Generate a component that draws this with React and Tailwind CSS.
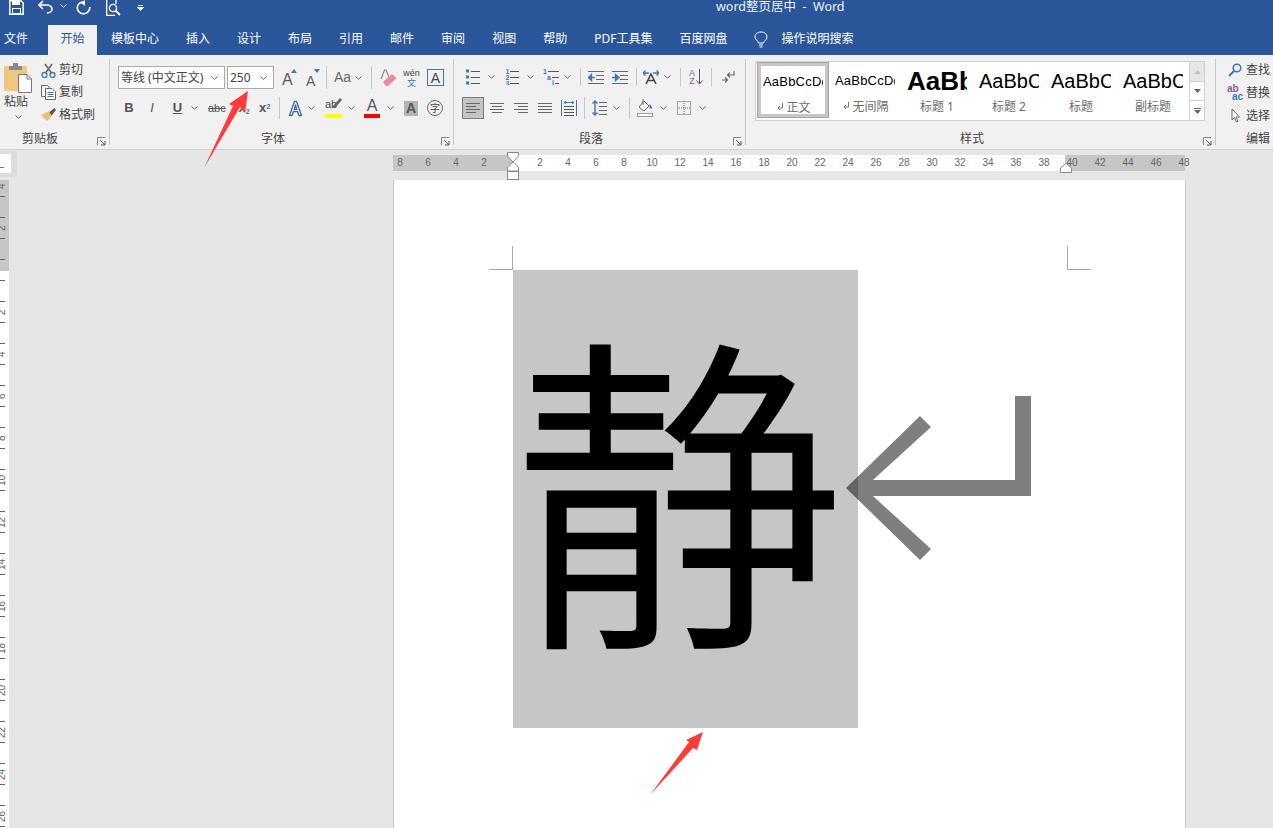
const blue = '#3c78b5'

const Chev = ({ className = '', color = '#666' }) => (
  <svg width="7" height="4" viewBox="0 0 7 4" className={`shrink-0 ${className}`}>
    <path d="M0.5 0.5 L3.5 3.2 L6.5 0.5" fill="none" stroke={color} strokeWidth="1" />
  </svg>
)

const Sep = ({ className = '' }) => <div className={`w-px self-stretch bg-[#c6c6c6] shrink-0 ${className}`} />

const Launcher = () => (
  <svg width="9" height="9" viewBox="0 0 9 9" className="absolute right-[3px] bottom-[-1px]">
    <path d="M0.5 8 V0.5 H8" fill="none" stroke="#888" />
    <path d="M3 3 L7.5 7.5 M4 8 H8 V4" fill="none" stroke="#555" />
  </svg>
)

const Group = ({ label, width, labelClass = 'text-center', children }) => (
  <div className={`relative h-[86px] shrink-0 flex flex-col border-r border-[#c6c6c6] ${width}`}>
    <div className="flex-1 min-h-0">{children}</div>
    <div className={`h-[12px] leading-[12px] text-[12px] text-[#444] ${labelClass}`}>{label}</div>
    <Launcher />
  </div>
)

const Lines = ({ rows, className = '', w = 14, h = 14 }) => (
  <svg width={w} height={h} viewBox={`0 0 ${w} ${h}`} className={`shrink-0 ${className}`}>
    {rows.map(([x1, x2, y], i) => <path key={i} d={`M${x1} ${y}.5 H${x2}`} stroke="#666" />)}
  </svg>
)

const Bullets = ({ className }) => (
  <svg width="14" height="16" viewBox="0 0 14 16" className={`shrink-0 ${className}`}>
    {[2, 8, 14].map(y => <g key={y}><rect x="0" y={y - 1.5} width="3" height="3" fill={blue} /><path d={`M5 ${y}.5 H14`} stroke="#555" /></g>)}
  </svg>
)

const Tiny = ({ x, y, children }) => (
  <text x={x} y={y} fontSize="7" fontWeight="700" fill={blue} fontFamily="Liberation Sans, sans-serif">{children}</text>
)

const Numbers = ({ className }) => (
  <svg width="14" height="16" viewBox="0 0 14 16" className={`shrink-0 ${className}`}>
    {[2, 8, 14].map((y, i) => <g key={y}><Tiny x={0.5} y={y + 2.5}>{i + 1}</Tiny><path d={`M5 ${y}.5 H14`} stroke="#555" /></g>)}
  </svg>
)

const Multi = ({ className }) => (
  <svg width="16" height="16" viewBox="0 0 16 16" className={`shrink-0 ${className}`}>
    <Tiny x={0} y={5}>1</Tiny><path d="M5 2.5 H16" stroke="#555" />
    <Tiny x={4} y={11}>a</Tiny><path d="M9 8.5 H16" stroke="#555" />
    <Tiny x={9} y={16}>i</Tiny><path d="M12 14.5 H16" stroke="#555" />
  </svg>
)

const Indent = ({ flip, className }) => (
  <svg width="16" height="14" viewBox="0 0 16 14" className={`shrink-0 ${className}`}>
    <path d="M0 1.5 H16 M8 5.5 H16 M8 9.5 H16 M0 13.5 H16" stroke="#666" />
    {flip
      ? <path d="M0 7.5 H5 M3.5 4.5 L7 7.5 L3.5 10.5 Z" stroke={blue} fill={blue} strokeWidth="1.4" />
      : <path d="M7 7.5 H2 M3.5 4.5 L0.5 7.5 L3.5 10.5 Z" stroke={blue} fill={blue} strokeWidth="1.4" />}
  </svg>
)

const Return = ({ size = 14, className = '' }) => (
  <svg width={size} height={size} viewBox="0 0 14 14" className={`shrink-0 ${className}`}>
    <path d="M13 1 V5 H7 M9 2.5 L6.5 5 L9 7.5" fill="none" stroke="#666" strokeWidth="1.1" />
    <path d="M1 10 H6 M4 7.5 L6.5 10 L4 12.5" fill="none" stroke="#666" strokeWidth="1.1" />
  </svg>
)

const Clipboard = () => (
  <svg width="28" height="30" viewBox="0 0 28 30">
    <rect x="0" y="3" width="23" height="25" rx="1.5" fill="#efc77f" />
    <rect x="5" y="3" width="13" height="4" fill="#8a8a8a" />
    <rect x="9" y="0" width="5" height="4" fill="#8a8a8a" />
    <path d="M14.5 11.5 H23 L27.5 16 V29.5 H14.5 Z" fill="#fff" stroke="#777" />
    <path d="M23 11.5 V16 H27.5" fill="none" stroke="#777" />
  </svg>
)

const Scissors = () => (
  <svg width="15" height="15" viewBox="0 0 15 15">
    <path d="M4 1 L10.5 10 M11 1 L4.5 10" stroke="#6a6a6a" strokeWidth="1.6" />
    <circle cx="3.5" cy="12" r="2.5" fill="none" stroke={blue} strokeWidth="1.3" />
    <circle cx="11.5" cy="12" r="2.5" fill="none" stroke={blue} strokeWidth="1.3" />
  </svg>
)

const CopyIcon = () => (
  <svg width="15" height="15" viewBox="0 0 15 15">
    <path d="M0.5 0.5 H6.5 L8 2 V3 M0.5 0.5 V11.5 H4" fill="#fff" stroke="#666" />
    <path d="M4.5 3.5 H11 L14.5 7 V14.5 H4.5 Z" fill="#fff" stroke="#666" />
    <path d="M6.5 7.5 H12.5 M6.5 9.5 H12.5 M6.5 11.5 H12.5" stroke={blue} />
  </svg>
)

const Brush = () => (
  <svg width="15" height="14" viewBox="0 0 15 14">
    <path d="M0 7 L8 3 L11 8 L6 13 C4 11 2 9 0 7 Z" fill="#e9be78" />
    <path d="M8.5 4 L13.5 0 L15 2 L10.5 7.5 Z" fill="#555" />
  </svg>
)

const Glyph = ({ className = '', children }) => (
  <span className={`shrink-0 text-center font-['Liberation_Sans',sans-serif] ${className}`}>{children}</span>
)

const GrowA = ({ down, className = '' }) => (
  <div className={`relative shrink-0 h-[20px] ${down ? 'w-[14px]' : 'w-[15px]'} ${className}`}>
    <Glyph className={`absolute left-0 bottom-0 leading-none text-[#5b5b5b] ${down ? 'text-[14px]' : 'text-[16px]'}`}>A</Glyph>
    <svg width="6" height="4" viewBox="0 0 6 4" className="absolute right-0 top-[1px]">
      <path d={down ? 'M0 0 H6 L3 4 Z' : 'M3 0 L6 4 H0 Z'} fill={blue} />
    </svg>
  </div>
)

const Eraser = ({ className }) => (
  <svg width="17" height="18" viewBox="0 0 17 18" className={`shrink-0 ${className}`}>
    <path d="M1 10 L4.5 1 H6 L9 8" fill="none" stroke="#8a8a8a" strokeWidth="1.2" />
    <path d="M3 13 L12 5 L16.5 9 L8 17 H6 Z" fill="#ec8a96" />
  </svg>
)

const BigA = ({ className = '', color = '#1c4f8e' }) => (
  <svg width="15" height="17" viewBox="0 0 15 17" className={`shrink-0 ${className}`}>
    <path d="M1.5 15.5 L6.5 1.5 H8.5 L13.5 15.5 H11 L9.6 11.5 H5.4 L4 15.5 Z M6.2 9.4 H8.8 L7.5 5 Z" fill="#fff" stroke={color} strokeWidth="1.4" strokeLinejoin="round" opacity="0.8" />
  </svg>
)

const Highlight = ({ className }) => (
  <div className={`shrink-0 w-[17px] h-[20px] flex flex-col items-center justify-end relative ${className}`}>
    <span className="absolute left-0 top-0 text-[11px] leading-[12px] font-['Liberation_Sans',sans-serif] text-[#444]">ab</span>
    <svg width="9" height="11" viewBox="0 0 9 11" className="absolute right-0 top-[0px]">
      <path d="M7 0 L9 2 L2 10 L0 10 L0 8 Z" fill="#666" />
    </svg>
    <div className="w-full h-[4px] bg-[#ffff00]" />
  </div>
)

const FontColor = ({ className }) => (
  <div className={`shrink-0 w-[16px] h-[20px] flex flex-col items-center justify-end ${className}`}>
    <Glyph className="text-[16px] leading-[16px] text-[#555]">A</Glyph>
    <div className="w-full h-[4px] bg-[#ff0000]" />
  </div>
)

const AlignLeft = () => <Lines rows={[[0, 14, 2], [0, 10, 5], [0, 14, 8], [0, 10, 11]]} />

const Distribute = ({ className }) => (
  <svg width="16" height="16" viewBox="0 0 16 16" className={`shrink-0 ${className}`}>
    <path d="M0.5 0 V16 M15.5 0 V16" stroke={blue} />
    <path d="M3 2.5 H13 M3 2.5 L5 1 M3 2.5 L5 4 M13 2.5 L11 1 M13 2.5 L11 4" stroke={blue} fill="none" />
    <path d="M3 6.5 H13 M3 9.5 H13 M3 12.5 H13 M3 15.5 H13" stroke="#555" />
  </svg>
)

const Spacing = ({ className }) => (
  <svg width="15" height="16" viewBox="0 0 15 16" className={`shrink-0 ${className}`}>
    <path d="M3 1 V15 M0.5 3.5 L3 1 L5.5 3.5 M0.5 12.5 L3 15 L5.5 12.5" fill="none" stroke={blue} strokeWidth="1.4" />
    <path d="M7 2.5 H15 M7 6.5 H15 M7 10.5 H15 M7 14.5 H15" stroke="#666" />
  </svg>
)

const Shading = ({ className }) => (
  <svg width="16" height="18" viewBox="0 0 16 18" className={`shrink-0 ${className}`}>
    <path d="M2 8 L7 2 L12 7 L7 12 Z" fill="#fff" stroke="#666" />
    <path d="M6 0 V6" stroke="#666" />
    <path d="M12.5 5 C15 7 15.5 9 14.5 10 L12.5 9 Z" fill={blue} />
    <rect x="0.5" y="14.5" width="15" height="3" fill="#fff" stroke="#999" />
  </svg>
)

const Borders = ({ className }) => (
  <svg width="14" height="14" viewBox="0 0 14 14" className={`shrink-0 ${className}`}>
    <rect x="0.5" y="0.5" width="13" height="13" fill="none" stroke="#666" strokeDasharray="1 1" />
    <path d="M7 0 V14 M0 7 H14" stroke="#666" strokeDasharray="1 1" />
  </svg>
)

const FileMark = () => (
  <svg width="10" height="12" viewBox="0 0 10 12" className="shrink-0">
    <path d="M7.5 1 V6 H3 M5 4 L3 6 L5 8" fill="none" stroke="#777" />
  </svg>
)

const StyleItem = ({ sample, label, mark, selected, sampleClass }) => (
  <div className={`w-[72px] h-[56px] shrink-0 flex flex-col items-center ${selected ? 'border border-[#a6a6a6] outline-[3px] outline-[#c6c6c6] -outline-offset-4' : ''}`}>
    <div className="h-[38px] w-[60px] overflow-hidden flex items-center justify-start">
      <span className={`whitespace-nowrap text-black font-['Liberation_Sans',sans-serif] ${sampleClass}`}>{sample}</span>
    </div>
    <div className="flex items-center text-[12px] leading-[16px] text-[#6b6b6b] -mt-[1px]">
      {mark && <span className="mr-[1px]"><FileMark /></span>}
      {label}
    </div>
  </div>
)

const tabs = ['插入', '设计', '布局', '引用', '邮件', '审阅', '视图', '帮助', 'PDF工具集', '百度网盘']
const hNums = [8, 6, 4, 2, '', 2, 4, 6, 8, 10, 12, 14, 16, 18, 20, 22, 24, 26, 28, 30, 32, 34, 36, 38, 40, 42, 44, 46, 48]
const vNums = [4, 2, '', 2, 4, 6, 8, 10, 12, 14, 16, 18, 20, 22, 24, 26]

export default function App() {
  return (
    <div className="relative w-[1273px] h-[828px] overflow-hidden bg-[#e6e6e6] font-['Noto_Sans','Noto_Sans_CJK_SC',sans-serif]">
      {/* title bar */}
      <div className="h-[25px] bg-[#2b579a] flex items-center text-white">
        <svg width="15" height="15" viewBox="0 0 15 15" className="ml-[9px] -mt-[11px] shrink-0">
          <path d="M0.8 0.8 H12 L14.2 3 V14.2 H0.8 Z" fill="none" stroke="#fff" strokeWidth="1.5" />
          <rect x="3" y="0" width="8" height="5" fill="#fff" />
          <rect x="3.5" y="8.5" width="8" height="5" fill="none" stroke="#fff" />
        </svg>
        <svg width="15" height="14" viewBox="0 0 15 14" className="ml-[14px] -mt-[12px] shrink-0">
          <path d="M1 5 H9 C13 5 14 8 14 9 C14 11 12 13 9 13" fill="none" stroke="#fff" strokeWidth="1.6" />
          <path d="M5 1 L1 5 L5 9" fill="none" stroke="#fff" strokeWidth="1.6" />
        </svg>
        <Chev color="#d8e2f0" className="ml-[7px] -mt-[13px]" />
        <svg width="15" height="15" viewBox="0 0 15 15" className="ml-[9px] -mt-[11px] shrink-0">
          <path d="M9 2.5 C4 1 1 5 1.2 8 C1.5 12 5 14 8 13.8 C11 13.5 14 11 13.8 7" fill="none" stroke="#fff" strokeWidth="1.6" />
          <path d="M9 0 V6 L5 3 Z" fill="#fff" />
        </svg>
        <svg width="15" height="16" viewBox="0 0 15 16" className="ml-[15px] -mt-[9px] shrink-0">
          <path d="M0.7 0 V15.3 H9 M10 0 V4" fill="none" stroke="#fff" strokeWidth="1.3" />
          <circle cx="7" cy="8" r="3.6" fill="none" stroke="#fff" strokeWidth="1.3" />
          <path d="M9.5 10.5 L14 15" stroke="#fff" strokeWidth="1.8" />
        </svg>
        <svg width="7" height="6" viewBox="0 0 7 6" className="ml-[16px] -mt-[10px] shrink-0">
          <path d="M1 0.5 H6 M0.5 2.5 H6.5 L3.5 5.5 Z" stroke="#fff" fill="#fff" strokeWidth="0.8" />
        </svg>
        <span className="ml-[572px] -mt-[11px] text-[12.5px] leading-none whitespace-pre text-[#eef2f8]">word整页居中  -  Word</span>
      </div>

      {/* tabs */}
      <div className="h-[30px] bg-[#2b579a] flex text-[12px] text-white whitespace-nowrap leading-[28px]">
        <span className="ml-[4px]">文件</span>
        <span className="ml-[20px] w-[49px] text-center bg-[#f1f1f1] text-[#2b579a]">开始</span>
        <span className="ml-[14px]">模板中心</span>
        {tabs.map(t => <span key={t + 'x'} className="ml-[27px]">{t}</span>)}
        <svg width="14" height="18" viewBox="0 0 14 18" className="ml-[27px] mt-[6px] shrink-0">
          <path d="M4.5 12 C4 9.5 1 9 1 5.8 C1 3 3.5 1 7 1 C10.5 1 13 3 13 5.8 C13 9 10 9.5 9.5 12 Z" fill="none" stroke="#fff" />
          <path d="M5 14 H9 M5.5 16 H8.5" stroke="#fff" />
        </svg>
        <span className="ml-[13px]">操作说明搜索</span>
      </div>

      {/* ribbon */}
      <div className="h-[95px] bg-[#f1f1f1] border-b border-[#d0d0d0] pt-[4px] flex text-[12px] text-[#444]">
        <Group label="剪贴板" width="w-[110px]" labelClass="pr-[29px] text-center">
          <div className="flex">
            <div className="ml-[4px] w-[28px] flex flex-col items-start pt-[4px]">
              <Clipboard />
              <span className="leading-[16px] mt-[1px]">粘贴</span>
              <Chev className="mt-[5px] ml-[11px]" />
            </div>
            <div className="ml-[9px] flex flex-col">
              <div className="h-[22px] flex items-center gap-[3px]"><Scissors /><span>剪切</span></div>
              <div className="h-[22px] flex items-center gap-[3px]"><CopyIcon /><span>复制</span></div>
              <div className="h-[23px] flex items-center gap-[3px]"><Brush /><span>格式刷</span></div>
            </div>
          </div>
        </Group>

        <Group label="字体" width="w-[344px]" labelClass="pr-[17px] text-center">
          <div className="mt-[7px] h-[23px] flex items-center">
            <div className="ml-[8px] w-[107px] h-full bg-white border border-[#ababab] flex items-center justify-between pl-[2px] pr-[6px] whitespace-nowrap"><span>等线 (中文正文)</span><Chev /></div>
            <div className="ml-[2px] w-[47px] h-full bg-white border border-[#ababab] flex items-center justify-between pl-[2px] pr-[6px]"><span>250</span><Chev /></div>
            <GrowA className="ml-[8px]" />
            <GrowA down className="ml-[9px]" />
            <Sep className="ml-[6px]" />
            <Glyph className="ml-[7px] w-[17px] text-[14px] text-[#666]">Aa</Glyph>
            <Chev className="ml-[4px]" />
            <Sep className="ml-[9px]" />
            <Eraser className="ml-[8px]" />
            <div className="ml-[6px] w-[17px] shrink-0 flex flex-col items-center text-[9px] leading-[9px]">
              <span className="font-['Liberation_Sans',sans-serif] text-[#444]">wén</span>
              <span className="text-[#3c78b5]">文</span>
            </div>
            <div className="ml-[7px] w-[17px] h-[17px] shrink-0 border border-[#3c78b5] flex items-center justify-center">
              <Glyph className="text-[14px] leading-none text-[#444]">A</Glyph>
            </div>
          </div>
          <div className="mt-[8px] h-[22px] flex items-center">
            <Glyph className="ml-[14px] w-[10px] text-[13px] font-bold text-[#555]">B</Glyph>
            <Glyph className="ml-[14px] w-[8px] text-[13px] italic text-[#555]">I</Glyph>
            <Glyph className="ml-[16px] w-[11px] text-[13px] underline font-bold text-[#555]">U</Glyph>
            <Chev className="ml-[8px]" />
            <Glyph className="ml-[10px] w-[17px] text-[11px] line-through text-[#555]">abc</Glyph>
            <Glyph className="ml-[13px] w-[12px] text-[13px] font-bold text-[#555]">x<sub className="text-[7px] text-[#3c78b5]">2</sub></Glyph>
            <Glyph className="ml-[8px] w-[13px] text-[13px] font-bold text-[#555]">x<sup className="text-[7px] text-[#3c78b5]">2</sup></Glyph>
            <Sep className="ml-[8px]" />
            <BigA className="ml-[8px]" />
            <Chev className="ml-[5px]" />
            <Highlight className="ml-[10px]" />
            <Chev className="ml-[6px]" />
            <FontColor className="ml-[9px]" />
            <Chev className="ml-[7px]" />
            <div className="ml-[10px] w-[14px] h-[15px] shrink-0 bg-[#b4b4b4] flex items-center justify-center">
              <Glyph className="text-[14px] font-bold leading-none text-[#555]">A</Glyph>
            </div>
            <div className="ml-[9px] w-[16px] h-[16px] shrink-0 rounded-full border border-[#666] flex items-center justify-center text-[10px] leading-none">字</div>
          </div>
        </Group>

        <Group label="段落" width="w-[292px]" labelClass="pr-[17px] text-center">
          <div className="mt-[9px] h-[18px] flex items-center">
            <Bullets className="ml-[12px]" />
            <Chev className="ml-[8px]" />
            <Numbers className="ml-[10px]" />
            <Chev className="ml-[8px]" />
            <Multi className="ml-[9px]" />
            <Chev className="ml-[5px]" />
            <Sep className="ml-[9px]" />
            <Indent className="ml-[7px]" />
            <Indent flip className="ml-[8px]" />
            <Sep className="ml-[8px]" />
            <svg width="16" height="14" viewBox="0 0 16 14" className="ml-[6px] shrink-0">
              <path d="M3 14 L8 4 L13 14 M5 10.5 H11" fill="none" stroke="#444" strokeWidth="1.6" />
              <path d="M0 3 H6 M2.5 0.5 L0 3 L2.5 5.5 M10 3 H16 M13.5 0.5 L16 3 L13.5 5.5" fill="none" stroke={blue} strokeWidth="1.3" />
            </svg>
            <Chev className="ml-[5px]" />
            <Sep className="ml-[9px]" />
            <div className="ml-[8px] w-[16px] shrink-0 flex items-center">
              <div className="flex flex-col items-center text-[9px] leading-[8px] font-['Liberation_Sans',sans-serif]">
                <span className="text-[#3c78b5]">A</span>
                <span className="text-[#8a5aa8]">Z</span>
              </div>
              <svg width="7" height="16" viewBox="0 0 7 16" className="ml-[1px]"><path d="M3.5 0 V15 M0.5 11.5 L3.5 15 L6.5 11.5" fill="none" stroke="#555" /></svg>
            </div>
            <Sep className="ml-[6px]" />
            <Return className="ml-[9px]" />
          </div>
          <div className="mt-[11px] h-[22px] flex items-center">
            <div className="ml-[8px] w-[22px] h-[22px] shrink-0 bg-[#c4c4c4] border border-[#7a7a7a] flex items-center justify-center"><AlignLeft /></div>
            <Lines className="ml-[6px]" rows={[[0, 14, 2], [2, 12, 5], [0, 14, 8], [2, 12, 11]]} />
            <Lines className="ml-[10px]" rows={[[0, 14, 2], [4, 14, 5], [0, 14, 8], [4, 14, 11]]} />
            <Lines className="ml-[10px]" rows={[[0, 14, 2], [0, 14, 5], [0, 14, 8], [0, 14, 11]]} />
            <Distribute className="ml-[9px]" />
            <Sep className="ml-[7px]" />
            <Spacing className="ml-[7px]" />
            <Chev className="ml-[6px]" />
            <Sep className="ml-[9px]" />
            <Shading className="ml-[7px]" />
            <Chev className="ml-[7px]" />
            <Borders className="ml-[10px]" />
            <Chev className="ml-[8px]" />
          </div>
        </Group>

        <Group label="样式" width="w-[470px]" labelClass="pr-[17px] text-center">
          <div className="ml-[9px] mt-[2px] w-[450px] h-[60px] bg-white border border-[#cfcfcf] flex pl-[1px] pt-[0px]">
            <StyleItem selected mark label="正文" sample="AaBbCcDd" sampleClass="text-[13px] tracking-[0.2px]" />
            <StyleItem mark label="无间隔" sample="AaBbCcDd" sampleClass="text-[13px] tracking-[0.2px]" />
            <StyleItem label="标题 1" sample="AaBbCcDd" sampleClass="text-[26px] font-bold" />
            <StyleItem label="标题 2" sample="AaBbCcDd" sampleClass="text-[20px]" />
            <StyleItem label="标题" sample="AaBbCcDd" sampleClass="text-[20px]" />
            <StyleItem label="副标题" sample="AaBbCcDd" sampleClass="text-[20px] font-medium" />
            <div className="ml-auto w-[15px] border-l border-[#cfcfcf] flex flex-col">
              <div className="h-[20px] bg-[#e6e6e6] border-b border-[#cfcfcf] flex items-center justify-center">
                <svg width="7" height="4" viewBox="0 0 7 4"><path d="M3.5 0 L7 4 H0 Z" fill="#c0c0c0" /></svg>
              </div>
              <div className="h-[19px] border-b border-[#cfcfcf] flex items-center justify-center">
                <svg width="7" height="4" viewBox="0 0 7 4"><path d="M0 0 H7 L3.5 4 Z" fill="#666" /></svg>
              </div>
              <div className="flex-1 flex flex-col items-center justify-center gap-[1px]">
                <div className="w-[7px] h-px bg-[#666]" />
                <svg width="7" height="4" viewBox="0 0 7 4"><path d="M0 0 H7 L3.5 4 Z" fill="#666" /></svg>
              </div>
            </div>
          </div>
        </Group>

        <div className="relative h-[86px] flex-1 flex flex-col">
          <div className="flex-1 pl-[12px]">
            <div className="h-[22px] flex items-center gap-[4px]">
              <svg width="14" height="14" viewBox="0 0 14 14" className="shrink-0">
                <circle cx="9" cy="5" r="3.8" fill="none" stroke={blue} strokeWidth="1.6" />
                <path d="M6 8 L1 13" stroke={blue} strokeWidth="2" />
              </svg>
              <span className="whitespace-nowrap">查找</span>
            </div>
            <div className="h-[23px] flex items-center gap-[3px] -ml-[1px]">
              <div className="w-[16px] shrink-0 flex flex-col font-['Liberation_Sans',sans-serif] text-[10px] leading-[8px] font-bold">
                <span className="text-[#8a5aa8]">ab</span>
                <span className="text-[#3c78b5] text-right">ac</span>
              </div>
              <span className="whitespace-nowrap">替换</span>
            </div>
            <div className="h-[23px] flex items-center gap-[4px]">
              <svg width="14" height="15" viewBox="0 0 14 15" className="shrink-0">
                <path d="M4 1 L4 12 L6.5 9.5 L8.5 14 L10 13.3 L8 9 L11.5 9 Z" fill="#fff" stroke="#666" />
              </svg>
              <span className="whitespace-nowrap">选择</span>
            </div>
          </div>
          <div className="h-[12px] leading-[12px] pl-[30px] whitespace-nowrap">编辑</div>
        </div>
      </div>

      {/* ruler row */}
      <div className="flex h-[30px]">
        <div className="w-[17px] h-[26px] mt-[1px] bg-[#dcdcdc] shrink-0 pr-[5px] pt-[3px]">
          <div className="w-[11px] h-[19px] bg-white pt-[13px]"><div className="w-[4px] h-px bg-[#777]" /></div>
        </div>
        <div className="ml-[376px] mt-[5px] h-[16px] w-[792px] relative flex shrink-0">
          <div className="w-[120px] bg-[#c6c6c6]" />
          <div className="w-[552px] bg-white" />
          <div className="w-[120px] bg-[#c6c6c6]" />
          <div className="absolute inset-0 -left-[7px] flex text-[10px] leading-[16px] text-[#666] font-['Liberation_Sans',sans-serif]">
            {hNums.map((n, i) => <span key={i} className="w-[28px] shrink-0 text-center">{n}</span>)}
          </div>
          <svg width="12" height="28" viewBox="0 0 12 28" className="absolute left-[114px] -top-[3px]">
            <path d="M0.5 0.5 H11.5 V4 L6 10 L0.5 4 Z M6 10 L11.5 15 V19 H0.5 V15 Z" fill="#fff" stroke="#888" />
            <rect x="0.5" y="19.5" width="11" height="8" fill="#fff" stroke="#888" />
          </svg>
          <svg width="12" height="10" viewBox="0 0 12 10" className="absolute left-[667px] top-[8px]">
            <path d="M6 0.5 L11.5 5 V9.5 H0.5 V5 Z" fill="#fff" stroke="#888" />
          </svg>
        </div>
      </div>

      {/* document area */}
      <div className="flex h-[648px]">
        <div className="w-[9px] shrink-0 h-full overflow-hidden bg-white relative">
          <div className="absolute left-0 top-0 w-full h-[91px] bg-[#c6c6c6]" />
          <div className="relative -mt-[15px] flex flex-col">
            {vNums.map((n, i) => (
              <div key={i} className="relative h-[42px] shrink-0 flex flex-col justify-between py-[10px]">
                <div className="w-[5px] h-px bg-[#666]" />
                <div className="w-[5px] h-px bg-[#666]" />
                <span className="absolute -left-[3px] top-0 h-full flex justify-center items-center text-[10px] leading-[10px] text-[#666] [writing-mode:vertical-rl] rotate-180 font-['Liberation_Sans',sans-serif]">{n}</span>
              </div>
            ))}
          </div>
        </div>

        <div className="ml-[384px] w-[793px] h-full bg-white border-x border-[#c8c8c8] shrink-0">
          <div className="pt-[66px] pl-[95px] flex">
            <div className="w-[24px] h-[24px] border-r border-b border-[#a8a8a8]" />
            <div className="ml-[554px] w-[24px] h-[24px] border-l border-b border-[#a8a8a8]" />
          </div>
          <div className="flex pl-[119px]">
            <div className="w-[345px] h-[458px] pb-[41px] pr-[14px] bg-[#c6c6c6] flex items-center justify-center text-[332px] leading-none font-[350] text-black font-['Noto_Sans_CJK_SC',sans-serif] shrink-0">
              静
            </div>
            <svg width="185" height="164" viewBox="846 396 185 164" className="-ml-[12px] mt-[126px] shrink-0">
              <path d="M846 488 L920 416 L931 427 L873 480 H1015 V396 H1031 V496 H873 L931 549 L920 560 Z" fill="#000" opacity="0.5" />
            </svg>
          </div>
        </div>
      </div>

      {/* red annotation arrows */}
      <svg width="50" height="82" viewBox="200 90 50 82" className="absolute left-[200px] top-[90px] pointer-events-none">
        <path d="M248 91 L245 113 L240 107 L204 168 L233 106 L229 104 Z" fill="#ff3b3b" />
      </svg>
      <svg width="58" height="68" viewBox="648 730 58 68" className="absolute left-[648px] top-[730px] pointer-events-none">
        <path d="M703 732 L697 750 L693 748 L650 795 L689 742 L686 740 Z" fill="#ff3b3b" />
      </svg>
    </div>
  )
}
